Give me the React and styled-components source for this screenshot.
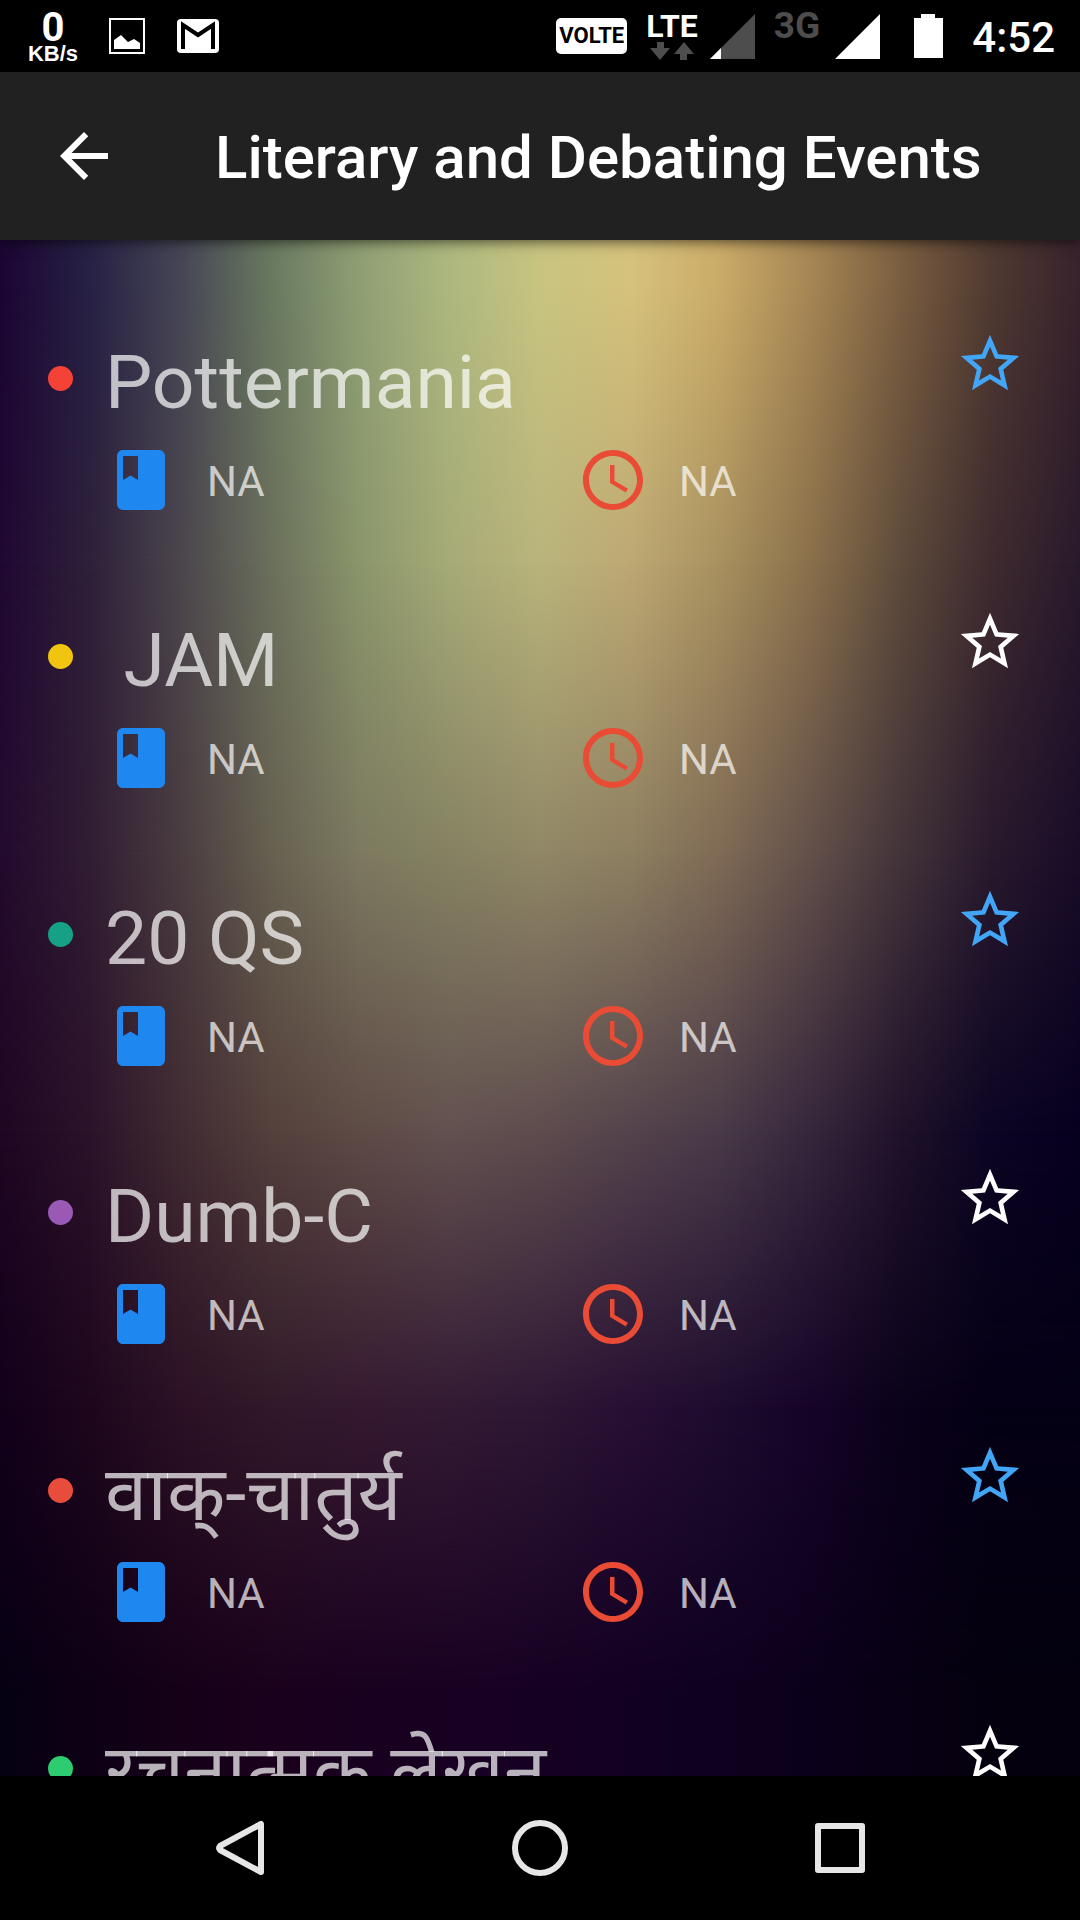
import React, { useState } from 'react';
import styled, { createGlobalStyle } from 'styled-components';

const GlobalStyle = createGlobalStyle`
* {
  box-sizing: border-box;
}
body {
  margin: 0;
  background: #000;
  font-family: Roboto, "Noto Sans", "Noto Sans Devanagari", sans-serif;
}
button {
  display: flex;
  align-items: center;
  justify-content: center;
  padding: 0;
  border: 0;
  background: none;
  color: inherit;
  cursor: pointer;
}
svg {
  display: block;
  flex: none;
}`;

const Page = styled.div`
  display: flex;
  flex-direction: column;
  height: 100vh;
  color: #fff;
`;

const StatusBar = styled.header`
  display: flex;
  justify-content: space-between;
  flex: none;
  height: 72px;
  padding: 0 25px 0 29px;
  background: #000;
`;

const StatusGroup = styled.div`
  display: flex;
  align-items: center;
  align-self: stretch;
  gap: ${(props) => props.$gap}px;
`;

const Speed = styled.div`
  display: flex;
  flex-direction: column;
  align-items: center;
  width: 48px;
  padding-top: 3px;
  font: bold 22px/20px "Liberation Sans", sans-serif;
`;

const SpeedValue = styled.span`
  font: bold 40px/32px "Liberation Sans Narrow", Roboto, sans-serif;
`;

const Volte = styled.span`
  width: 71px;
  border-radius: 5px;
  background: #fff;
  color: #000;
  font-size: 22px;
  font-weight: 700;
  line-height: 36px;
  text-align: center;
`;

const Network = styled.div`
  display: flex;
  flex-direction: column;
  align-items: center;
  align-self: flex-start;
  padding-top: 10px;
  color: ${(props) => (props.$dim ? '#4d4d4d' : '#fff')};
  font-size: ${(props) => (props.$dim ? 37 : 32)}px;
  font-weight: 700;
  line-height: 32px;
`;

const Battery = styled.svg`
  margin-left: 15px;
`;

const Clock = styled.span`
  padding-top: 4px;
  font-size: 42px;
  font-weight: 500;
  line-height: 48px;
`;

const AppBar = styled.div`
  position: relative;
  z-index: 1;
  display: flex;
  align-items: center;
  flex: none;
  gap: 95px;
  height: 168px;
  padding: 0 48px;
  background: #212121;
  box-shadow: 0 2px 12px rgba(0, 0, 0, 0.6);
`;

const BarTitle = styled.h1`
  margin: 0;
  padding-top: 4px;
  font-size: 60px;
  font-weight: 500;
  line-height: 72px;
  white-space: nowrap;
`;

const Content = styled.main`
  display: grid;
  flex: 1;
  min-height: 0;
  overflow: hidden;
  background: #05000e;
`;

// every band fades in over the one before it
const Band = styled.div`
  grid-area: 1 / 1;
  background: linear-gradient(to right, ${(props) => props.$colors.join(', ')});
  mask-image: ${(props) => (props.$to ? `linear-gradient(to bottom, transparent ${props.$from}%, #000 ${props.$to}%)` : 'none')};
`;

const List = styled.ul`
  z-index: 0;
  grid-area: 1 / 1;
  min-height: 0;
  margin: 0;
  padding: 89px 31px 0 48px;
  overflow-y: auto;
  scrollbar-width: none;
  list-style: none;
`;

const Item = styled.li`
  display: flex;
  gap: 32px;
  height: 278px;
`;

const Dot = styled.span`
  flex: none;
  width: 25px;
  height: 25px;
  margin-top: 37px;
  border-radius: 50%;
  background: ${(props) => props.$color};
`;

const ItemBody = styled.div`
  flex: 1;
`;

const Heading = styled.div`
  display: flex;
  align-items: flex-start;
  justify-content: space-between;
  height: 115px;
  padding-right: 24px;
`;

const EventName = styled.h2`
  margin: 0;
  padding-top: 8px;
  color: rgba(255, 255, 255, 0.7);
  font-size: 75px;
  font-weight: 400;
  line-height: 90px;
  white-space: pre;

  &:lang(hi) {
    font-size: 76px;
  }
`;

const StarButton = styled.button`
  color: ${(props) => (props.$active ? '#42a5f5' : '#fff')};
`;

const Details = styled.div`
  display: grid;
  grid-template-columns: 1fr 1fr;
`;

const Detail = styled.div`
  display: flex;
  align-items: center;
  gap: 30px;
`;

const DetailText = styled.span`
  padding-top: 4px;
  color: rgba(255, 255, 255, 0.7);
  font-size: 42px;
  line-height: 48px;
`;

const NavBar = styled.nav`
  display: grid;
  grid-template-columns: repeat(3, 1fr);
  flex: none;
  height: 144px;
  padding: 0 90px;
  background: #000;
  color: #e6e6e6;
`;

const Icon = ({ d, size, color = 'currentColor' }) => (
  <svg width={size} height={size} viewBox="0 0 24 24" fill={color} aria-hidden="true">
    <path d={d} />
  </svg>
);

const paths = {
  back: 'M20 11H7.83l5.59-5.59L12 4l-8 8 8 8 1.41-1.41L7.83 13H20v-2z',
  book: 'M18 2H6c-1.1 0-2 .9-2 2v16c0 1.1.9 2 2 2h12c1.1 0 2-.9 2-2V4c0-1.1-.9-2-2-2zM6 4h5v8l-2.5-1.5L6 12V4z',
  time: 'M11.99 2C6.47 2 2 6.48 2 12s4.47 10 9.99 10C17.52 22 22 17.52 22 12S17.52 2 11.99 2zM12 20c-4.42 0-8-3.58-8-8s3.58-8 8-8 8 3.58 8 8-3.58 8-8 8zM12.5 7H11v6l5.25 3.15.75-1.23-4.5-2.67z',
  star: 'M22 9.24l-7.19-.62L12 2 9.19 8.63 2 9.24l5.46 4.73L5.82 21 12 17.27 18.18 21l-1.63-7.03L22 9.24zM12 15.4l-3.76 2.27 1-4.28-3.32-2.88 4.38-.38L12 6.1l1.71 4.04 4.38.38-3.32 2.88 1 4.28L12 15.4z',
};

const Signal = ({ weak }) => (
  <svg width="45" height="45" viewBox="0 0 45 45" aria-hidden="true">
    <path d="M0 45L45 0V45z" fill={weak ? '#4d4d4d' : '#fff'} />
    {weak && <path d="M0 45L11 34V45z" fill="#fff" />}
  </svg>
);

const bands = [
  { colors: ['#1b0533', '#272145', '#454555', '#68785f', '#8f9f74', '#adb87f', '#c8c480', '#d5c27c', '#cbab68', '#a68654', '#7a5e40', '#503a31', '#38222c'] },
  { from: 3, to: 21, colors: ['#200832', '#2e203a', '#4b454c', '#6a6f5c', '#8a966b', '#a6aa77', '#b9b47b', '#bda873', '#a8915f', '#8a704b', '#5e4b3b', '#3f2b2f', '#291a2b'] },
  { from: 21, to: 40, colors: ['#230a2e', '#311d33', '#493c40', '#666050', '#7c7960', '#858262', '#908766', '#8d7f61', '#7f6a55', '#63504a', '#43343a', '#291a2d', '#190c28'] },
  { from: 40, to: 58, colors: ['#1f0622', '#2b132a', '#412b32', '#54403c', '#5e4b46', '#635150', '#5e4c4e', '#54434c', '#493a48', '#36273c', '#20122a', '#0c0524', '#07001f'] },
  { from: 58, to: 76, colors: ['#12001a', '#1e071d', '#2c1124', '#311929', '#35192f', '#331a33', '#2d1734', '#270f33', '#1e0c2e', '#160428', '#0b021b', '#050015', '#050015'] },
  { from: 76, to: 95, colors: ['#060013', '#0d0015', '#150018', '#1a001c', '#180020', '#180022', '#160022', '#120021', '#0e001f', '#0b001b', '#080014', '#05000e', '#04000e'] },
];

const events = [
  { name: 'Pottermania', color: '#f44336', starred: true },
  { name: ' JAM', color: '#f1c40f', starred: false },
  { name: '20 QS', color: '#16a085', starred: true },
  { name: 'Dumb-C', color: '#9b59b6', starred: false },
  { name: 'वाक्-चातुर्य', lang: 'hi', color: '#e74c3c', starred: true },
  { name: 'रचनात्मक लेखन', lang: 'hi', color: '#2ecc71', starred: false },
];

const EventItem = ({ event }) => {
  const [starred, setStarred] = useState(event.starred);
  return (
    <Item>
      <Dot $color={event.color} />
      <ItemBody>
        <Heading>
          <EventName lang={event.lang}>{event.name}</EventName>
          <StarButton
            type="button"
            aria-label="Favourite"
            aria-pressed={starred}
            $active={starred}
            onClick={() => setStarred(!starred)}
          >
            <Icon d={paths.star} size={70} />
          </StarButton>
        </Heading>
        <Details>
          <Detail>
            <Icon d={paths.book} size={72} color="#1e88f0" />
            <DetailText>NA</DetailText>
          </Detail>
          <Detail>
            <Icon d={paths.time} size={72} color="#ea4b35" />
            <DetailText>NA</DetailText>
          </Detail>
        </Details>
      </ItemBody>
    </Item>
  );
};

const App = () => {
  return (
    <Page>
      <GlobalStyle />
      <StatusBar>
        <StatusGroup $gap={32}>
          <Speed>
            <SpeedValue>0</SpeedValue>
            KB/s
          </Speed>
          <svg width="36" height="36" viewBox="0 0 36 36" aria-hidden="true">
            <path d="M1 1H35V35H1z" fill="none" stroke="#fff" strokeWidth="2" />
            <path d="M5 31V22L12 17L19 24L25 21L31 25V31z" fill="#fff" />
          </svg>
          <svg width="42" height="34" viewBox="0 0 42 34" aria-hidden="true">
            <rect width="42" height="34" rx="4" fill="#fff" />
            <path d="M6 30V6L21 16L36 6V30" fill="none" stroke="#000" strokeWidth="4" />
          </svg>
        </StatusGroup>
        <StatusGroup $gap={19}>
          <Volte>VOLTE</Volte>
          <StatusGroup $gap={12}>
            <Network>
              LTE
              <svg width="44" height="18" viewBox="0 0 44 18" fill="#4d4d4d" aria-hidden="true">
                <path d="M7 0H14V6H20L10 18L0 6H7zM34 0L44 12H37V18H30V12H24z" />
              </svg>
            </Network>
            <Signal weak />
          </StatusGroup>
          <StatusGroup $gap={15}>
            <Network $dim>3G</Network>
            <Signal />
          </StatusGroup>
          <StatusGroup $gap={29}>
            <Battery width="29" height="44" viewBox="0 0 29 44" fill="#fff" aria-hidden="true">
              <path d="M0 4H7V0H21V4H29V44H0z" />
            </Battery>
            <Clock>4:52</Clock>
          </StatusGroup>
        </StatusGroup>
      </StatusBar>
      <AppBar>
        <button type="button" aria-label="Back">
          <Icon d={paths.back} size={72} />
        </button>
        <BarTitle>Literary and Debating Events</BarTitle>
      </AppBar>
      <Content>
        {bands.map((band, i) => (
          <Band key={i} $from={band.from} $to={band.to} $colors={band.colors} />
        ))}
        <List>
          {events.map((event) => (
            <EventItem key={event.name} event={event} />
          ))}
        </List>
      </Content>
      <NavBar>
        <button type="button" aria-label="System back">
          <svg width="56" height="56" viewBox="0 0 56 56" fill="none" stroke="currentColor" strokeWidth="6" strokeLinejoin="round" aria-hidden="true">
            <path d="M49 4V52L8 30Q6 28 8 26z" />
          </svg>
        </button>
        <button type="button" aria-label="Home">
          <svg width="56" height="56" viewBox="0 0 56 56" fill="none" stroke="currentColor" strokeWidth="6" aria-hidden="true">
            <circle cx="28" cy="28" r="25" />
          </svg>
        </button>
        <button type="button" aria-label="Recent apps">
          <svg width="56" height="56" viewBox="0 0 56 56" fill="none" stroke="currentColor" strokeWidth="6" strokeLinejoin="round" aria-hidden="true">
            <path d="M6 6H50V50H6z" />
          </svg>
        </button>
      </NavBar>
    </Page>
  );
};

export default App;
